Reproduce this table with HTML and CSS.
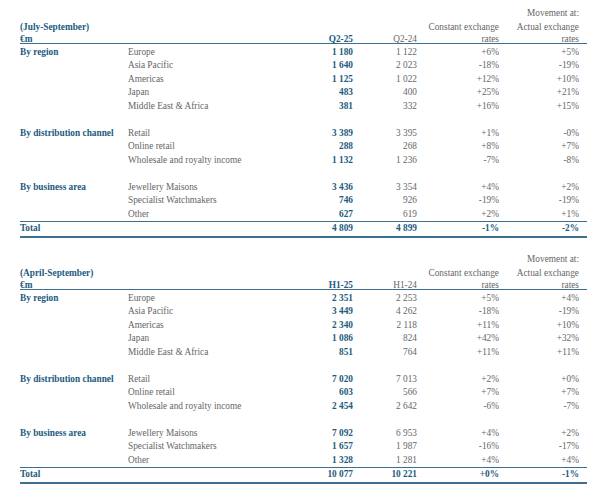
FILE: index.html
```html
<!DOCTYPE html>
<html lang="en">
<head>
<meta charset="utf-8">
<title>Sales</title>
<link rel="stylesheet" href="styles.css">
</head>
<body>
<table class="fin first">
  <colgroup>
    <col class="c-cat"><col class="c-item"><col class="c-cur"><col class="c-prev"><col class="c-cer"><col class="c-aer">
  </colgroup>
  <thead>
    <tr class="h1"><th colspan="5"></th><th class="num g">Movement at:</th></tr>
    <tr class="h2"><th class="b" colspan="2">(July-September)</th><th></th><th></th><th class="num g">Constant exchange</th><th class="num g">Actual exchange</th></tr>
    <tr class="h3"><th class="b" colspan="2">€m</th><th class="num b">Q2-25</th><th class="num g">Q2-24</th><th class="num g">rates</th><th class="num g">rates</th></tr>
  </thead>
  <tbody>
    <tr class="r1"><td class="b">By region</td><td class="g">Europe</td><td class="num b">1 180</td><td class="num g">1 122</td><td class="num g">+6%</td><td class="num g">+5%</td></tr>
    <tr><td></td><td class="g">Asia Pacific</td><td class="num b">1 640</td><td class="num g">2 023</td><td class="num g">-18%</td><td class="num g">-19%</td></tr>
    <tr><td></td><td class="g">Americas</td><td class="num b">1 125</td><td class="num g">1 022</td><td class="num g">+12%</td><td class="num g">+10%</td></tr>
    <tr><td></td><td class="g">Japan</td><td class="num b">483</td><td class="num g">400</td><td class="num g">+25%</td><td class="num g">+21%</td></tr>
    <tr><td></td><td class="g">Middle East &amp; Africa</td><td class="num b">381</td><td class="num g">332</td><td class="num g">+16%</td><td class="num g">+15%</td></tr>
    <tr class="sp"><td colspan="6"></td></tr>
    <tr><td class="b">By distribution channel</td><td class="g">Retail</td><td class="num b">3 389</td><td class="num g">3 395</td><td class="num g">+1%</td><td class="num g">-0%</td></tr>
    <tr><td></td><td class="g">Online retail</td><td class="num b">288</td><td class="num g">268</td><td class="num g">+8%</td><td class="num g">+7%</td></tr>
    <tr><td></td><td class="g">Wholesale and royalty income</td><td class="num b">1 132</td><td class="num g">1 236</td><td class="num g">-7%</td><td class="num g">-8%</td></tr>
    <tr class="sp"><td colspan="6"></td></tr>
    <tr><td class="b">By business area</td><td class="g">Jewellery Maisons</td><td class="num b">3 436</td><td class="num g">3 354</td><td class="num g">+4%</td><td class="num g">+2%</td></tr>
    <tr><td></td><td class="g">Specialist Watchmakers</td><td class="num b">746</td><td class="num g">926</td><td class="num g">-19%</td><td class="num g">-19%</td></tr>
    <tr><td></td><td class="g">Other</td><td class="num b">627</td><td class="num g">619</td><td class="num g">+2%</td><td class="num g">+1%</td></tr>
  </tbody>
  <tfoot>
    <tr class="total"><td class="b">Total</td><td></td><td class="num b">4 809</td><td class="num b">4 899</td><td class="num b">-1%</td><td class="num b">-2%</td></tr>
  </tfoot>
</table>

<table class="fin second">
  <colgroup>
    <col class="c-cat"><col class="c-item"><col class="c-cur"><col class="c-prev"><col class="c-cer"><col class="c-aer">
  </colgroup>
  <thead>
    <tr class="h1"><th colspan="5"></th><th class="num g">Movement at:</th></tr>
    <tr class="h2"><th class="b" colspan="2">(April-September)</th><th></th><th></th><th class="num g">Constant exchange</th><th class="num g">Actual exchange</th></tr>
    <tr class="h3"><th class="b" colspan="2">€m</th><th class="num b">H1-25</th><th class="num g">H1-24</th><th class="num g">rates</th><th class="num g">rates</th></tr>
  </thead>
  <tbody>
    <tr class="r1"><td class="b">By region</td><td class="g">Europe</td><td class="num b">2 351</td><td class="num g">2 253</td><td class="num g">+5%</td><td class="num g">+4%</td></tr>
    <tr><td></td><td class="g">Asia Pacific</td><td class="num b">3 449</td><td class="num g">4 262</td><td class="num g">-18%</td><td class="num g">-19%</td></tr>
    <tr><td></td><td class="g">Americas</td><td class="num b">2 340</td><td class="num g">2 118</td><td class="num g">+11%</td><td class="num g">+10%</td></tr>
    <tr><td></td><td class="g">Japan</td><td class="num b">1 086</td><td class="num g">824</td><td class="num g">+42%</td><td class="num g">+32%</td></tr>
    <tr><td></td><td class="g">Middle East &amp; Africa</td><td class="num b">851</td><td class="num g">764</td><td class="num g">+11%</td><td class="num g">+11%</td></tr>
    <tr class="sp"><td colspan="6"></td></tr>
    <tr><td class="b">By distribution channel</td><td class="g">Retail</td><td class="num b">7 020</td><td class="num g">7 013</td><td class="num g">+2%</td><td class="num g">+0%</td></tr>
    <tr><td></td><td class="g">Online retail</td><td class="num b">603</td><td class="num g">566</td><td class="num g">+7%</td><td class="num g">+7%</td></tr>
    <tr><td></td><td class="g">Wholesale and royalty income</td><td class="num b">2 454</td><td class="num g">2 642</td><td class="num g">-6%</td><td class="num g">-7%</td></tr>
    <tr class="sp"><td colspan="6"></td></tr>
    <tr><td class="b">By business area</td><td class="g">Jewellery Maisons</td><td class="num b">7 092</td><td class="num g">6 953</td><td class="num g">+4%</td><td class="num g">+2%</td></tr>
    <tr><td></td><td class="g">Specialist Watchmakers</td><td class="num b">1 657</td><td class="num g">1 987</td><td class="num g">-16%</td><td class="num g">-17%</td></tr>
    <tr><td></td><td class="g">Other</td><td class="num b">1 328</td><td class="num g">1 281</td><td class="num g">+4%</td><td class="num g">+4%</td></tr>
  </tbody>
  <tfoot>
    <tr class="total"><td class="b">Total</td><td></td><td class="num b">10 077</td><td class="num b">10 221</td><td class="num b">+0%</td><td class="num b">-1%</td></tr>
  </tfoot>
</table>
</body>
</html>
```

FILE: styles.css
```css
html, body {
  margin: 0;
  padding: 0;
  background: #ffffff;
}
body {
  padding: 6.5px 0 0 20px;
  font-family: "Liberation Serif", "Times New Roman", serif;
  font-size: 9.3px;
}
.fin {
  table-layout: fixed;
  width: 567px;
  border-collapse: collapse;
  border-spacing: 0;
}
.fin.second {
  margin-top: 14.25px;
}
.c-cat { width: 108px; }
.c-item { width: 165px; }
.c-cur { width: 60px; }
.c-prev { width: 64px; }
.c-cer { width: 82px; }
.c-aer { width: 88px; }
.fin th, .fin td {
  padding: 0;
  text-align: left;
  font-weight: normal;
  white-space: nowrap;
  line-height: 13.5px;
  vertical-align: top;
}
.fin .h1 th { line-height: 13.5px; }
.fin .h2 th { line-height: 14.5px; }
.fin .h3 th {
  line-height: 8px;
  height: 8px;
  border-bottom: 1px solid #3d6f8e;
}
.fin th:last-child, .fin td:last-child {
  padding-right: 8px;
}
.fin .num { text-align: right; }
.fin .b { color: #1c5b7e; font-weight: bold; }
.fin .g { color: #666666; }
.fin .r1 td { padding-top: 2.25px; }
.fin .sp td { height: 13.5px; }
.fin .total td {
  border-top: 1px solid #3d6f8e;
  border-bottom: 2px solid #3d6f8e;
  line-height: 12px;
  padding-top: 0;
  padding-bottom: 2px;
}
```
